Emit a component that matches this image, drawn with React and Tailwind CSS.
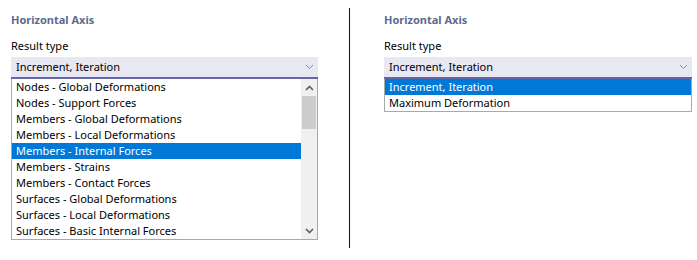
import React from 'react';

const leftItems = [
  'Nodes - Global Deformations',
  'Nodes - Support Forces',
  'Members - Global Deformations',
  'Members - Local Deformations',
  'Members - Internal Forces',
  'Members - Strains',
  'Members - Contact Forces',
  'Surfaces - Global Deformations',
  'Surfaces - Local Deformations',
  'Surfaces - Basic Internal Forces',
];

const rightItems = ['Increment, Iteration', 'Maximum Deformation'];

function Chevron({ up, bold, className }) {
  return (
    <svg width="9" height="6" viewBox="0 0 9 6" className={className}>
      <polyline
        points={up ? '1,5 4.5,1.5 8,5' : '1,1 4.5,4.5 8,1'}
        fill="none"
        stroke="currentColor"
        strokeWidth={bold ? 1.7 : 1}
      />
    </svg>
  );
}

function Combo() {
  return (
    <div className="flex h-[20px] items-center justify-between bg-[#e8e8f3] pl-[5px] pr-[4px]">
      <span>Increment, Iteration</span>
      <Chevron className="text-[#8a8a96]" />
    </div>
  );
}

function Row({ label, selected }) {
  return (
    <div
      className={
        'flex h-[16px] items-center pl-[4px] ' +
        (selected ? 'bg-[#0078d7] text-white' : 'text-black')
      }
    >
      {label}
    </div>
  );
}

function Panel({ children }) {
  return (
    <div className="flex flex-col">
      <div className="mt-[12px] h-[16px] font-bold text-[#5c6b8e]">Horizontal Axis</div>
      <div className="mt-[10px] h-[16px]">Result type</div>
      <div className="mt-[3px]">
        <Combo />
        <div className="h-[2px] bg-[#6466a8]" />
        {children}
      </div>
    </div>
  );
}

export default function App() {
  return (
    <div
      className="flex h-[260px] w-[697px] bg-white pl-[11px] text-[11px] leading-[16px] text-black"
      style={{ fontFamily: '"Noto Sans", "Open Sans", sans-serif' }}
    >
      <div className="w-[307px]">
        <Panel>
          <div className="flex h-[161px] border-x border-b border-[#a9a9a9]">
            <div className="flex-1">
              {leftItems.map((t) => (
                <Row key={t} label={t} selected={t === 'Members - Internal Forces'} />
              ))}
            </div>
            <div className="flex w-[16px] flex-col bg-[#f0f0f0]">
              <div className="flex h-[17px] items-center justify-center text-[#606060]">
                <Chevron up bold />
              </div>
              <div className="mx-px h-[33px] bg-[#cdcdcd]" />
              <div className="flex-1" />
              <div className="flex h-[17px] items-center justify-center text-[#606060]">
                <Chevron bold />
              </div>
            </div>
          </div>
        </Panel>
      </div>

      <div className="ml-[31px] mt-[8px] h-[240px] w-px bg-[#1a1a1a] shadow-[0_0_2px_rgba(0,0,0,0.15)]" />

      <div className="ml-[34px] w-[308px]">
        <Panel>
          <div className="border-x border-b border-[#a9a9a9]">
            {rightItems.map((t, i) => (
              <Row key={t} label={t} selected={i === 0} />
            ))}
          </div>
        </Panel>
      </div>
    </div>
  );
}
